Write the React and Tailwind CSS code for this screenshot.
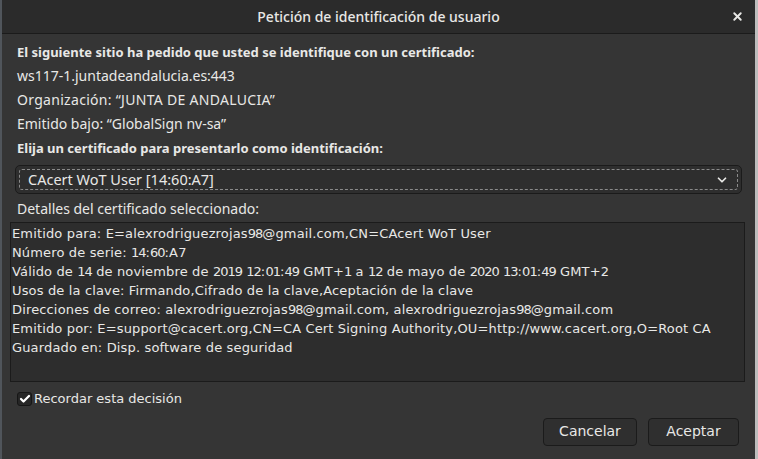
import { Check, ChevronDown, X } from "lucide-react";

const lines = [
  "Emitido para: E=alexrodriguezrojas98@gmail.com,CN=CAcert WoT User",
  "Número de serie: 14:60:A7",
  "Válido de 14 de noviembre de 2019 12:01:49 GMT+1 a 12 de mayo de 2020 13:01:49 GMT+2",
  "Usos de la clave: Firmando,Cifrado de la clave,Aceptación de la clave",
  "Direcciones de correo: alexrodriguezrojas98@gmail.com, alexrodriguezrojas98@gmail.com",
  "Emitido por: E=support@cacert.org,CN=CA Cert Signing Authority,OU=http://www.cacert.org,O=Root CA",
  "Guardado en: Disp. software de seguridad",
];

// the system font has narrower digits than DejaVu
function Line({ text }) {
  return (
    <div className="whitespace-nowrap">
      {text.split(/(\d+)/).map((part, i) =>
        /^\d+$/.test(part) ? (
          <span key={i} className="tracking-[-1px]">{part}</span>
        ) : (
          <span key={i}>{part}</span>
        )
      )}
    </div>
  );
}

export default function App() {
  return (
    <div className="w-[758px] h-[459px] flex bg-[#353535] text-[#e8e8e6] font-['Noto_Sans',sans-serif] overflow-hidden">
      <div className="w-[2px] h-full bg-[#50555b]" />

      <div className="flex-1 flex flex-col">
        {/* title bar */}
        <div className="relative h-[34px] bg-[#2b2b2b] border-b border-[#1b1b1b] flex items-center justify-center">
          <span className="text-[14px] font-medium">Petición de identificación de usuario</span>
          <X size={13} strokeWidth={3.5} className="absolute right-[11px] top-[10px] text-[#e8e8e6]" />
        </div>

        <div className="flex-1 flex flex-col pt-[6px]">
          <div className="px-[15px] text-[14px] leading-[24px]">
            <div className="font-bold text-[13px]">El siguiente sitio ha pedido que usted se identifique con un certificado:</div>
            <div>ws117-1.juntadeandalucia.es:443</div>
            <div className="tracking-[0.3px]">Organización: “JUNTA DE ANDALUCIA”</div>
            <div>Emitido bajo: “GlobalSign nv-sa”</div>
            <div className="font-bold text-[13px]">Elija un certificado para presentarlo como identificación:</div>
          </div>

          <div className="ml-[13px] mr-[13px] mt-[5px] h-[29px] rounded-[5px] border border-[#1b1b1b] bg-[#2e2e2e] p-[3px]">
            <div className="h-full border border-dashed border-[#8a8a8a] rounded-[3px] flex items-center justify-between pl-[8px] pr-[8px]">
              <span className="text-[14.5px]">CAcert WoT User [14:60:A7]</span>
              <ChevronDown size={14} strokeWidth={3} />
            </div>
          </div>

          <div className="px-[15px] mt-[4px] text-[14px] leading-[22px]">Detalles del certificado seleccionado:</div>

          <div className="ml-[8px] mr-[10px] mt-[2px] h-[160px] border border-[#1b1b1b] bg-[#2d2d2d] px-[1px] pt-[1px] font-['DejaVu_Sans',sans-serif] text-[13px] tracking-[0.15px] leading-[19px]">
            {lines.map((l) => (
              <Line key={l} text={l} />
            ))}
          </div>

          <div className="flex items-center gap-[2px] ml-[15px] mt-[7px]">
            <div className="w-[15px] h-[14px] rounded-[3px] border border-[#161616] bg-[#262626] flex items-center justify-center">
              <Check size={12} strokeWidth={4.5} className="text-white" />
            </div>
            <span className="font-['DejaVu_Sans',sans-serif] text-[13px]">Recordar esta decisión</span>
          </div>

          <div className="flex justify-end gap-[11px] mr-[16px] mt-[9px]">
            <button className="w-[94px] h-[28px] rounded-[4px] border border-[#1b1b1b] bg-[#2f2f2f] font-['DejaVu_Sans',sans-serif] text-[14px]">
              Cancelar
            </button>
            <button className="w-[91px] h-[28px] rounded-[4px] border border-[#1b1b1b] bg-[#2f2f2f] font-['DejaVu_Sans',sans-serif] text-[14px]">
              Aceptar
            </button>
          </div>
        </div>
      </div>

      <div className="w-[3px] h-full bg-[#bdbdbd]" />
    </div>
  );
}
